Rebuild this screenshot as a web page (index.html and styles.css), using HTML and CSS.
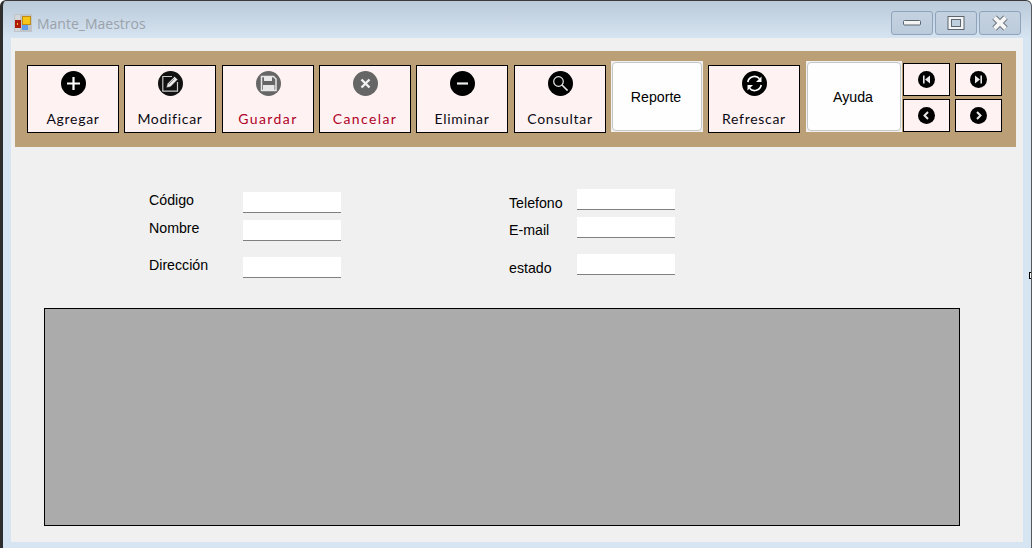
FILE: index.html
```html
<!DOCTYPE html>
<html lang="es">
<head>
<meta charset="utf-8">
<title>Mante_Maestros</title>
<link rel="stylesheet" href="styles.css">
</head>
<body>
<div class="window">
  <header class="titlebar">
    <svg class="app-icon" viewBox="0 0 18 18" width="18" height="18">
      <rect width="18" height="18" fill="#bfc4c8"/>
      <rect x="1" y="1" width="5" height="16" fill="#d5d8da"/>
      <rect x="1" y="6" width="6" height="8" fill="#b01808"/>
      <rect x="3" y="9" width="1" height="2" fill="#f0c040"/>
      <rect x="8.5" y="2.5" width="8" height="8" fill="#f5c518" stroke="#c08a10"/>
      <rect x="8" y="11" width="6" height="5" fill="#5f9de8"/>
    </svg>
    <span class="title">Mante_Maestros</span>
    <div class="win-controls">
      <div class="win-btn">
        <svg width="18" height="8" viewBox="0 0 18 8"><rect x=".5" y="1.5" width="17" height="4.5" rx="1" fill="#f4f4f4" stroke="#5c6670"/></svg>
      </div>
      <div class="win-btn">
        <svg width="18" height="16" viewBox="0 0 18 16"><rect x="1" y="1.5" width="16" height="13" fill="#f4f4f4" stroke="#5c6670"/><rect x="4.5" y="4.5" width="9" height="7" fill="#bfcedd" stroke="#5c6670"/></svg>
      </div>
      <div class="win-btn">
        <svg width="20" height="18" viewBox="0 0 20 18"><path d="M4.5 3.5L15.5 14.5M15.5 3.5L4.5 14.5" stroke="#5c6670" stroke-width="6"/><path d="M4.5 3.5L15.5 14.5M15.5 3.5L4.5 14.5" stroke="#f6f6f6" stroke-width="4"/></svg>
      </div>
    </div>
  </header>

  <main class="content">
    <div class="toolbar">
      <button class="tool">
        <svg class="icon" viewBox="0 0 25 25"><circle cx="12.5" cy="12.5" r="12.5" fill="#000"/><path d="M12.5 6v13M6 12.5h13" stroke="#fff" stroke-width="2.2"/></svg>
        <span class="tool-label">Agregar</span>
      </button>
      <button class="tool">
        <svg class="icon" viewBox="0 0 25 25"><circle cx="12.5" cy="12.5" r="12.5" fill="#111"/><path d="M14 5.5H4.8v14.7h14.7V11" fill="none" stroke="#c8c8c8" stroke-width="1.2"/><path d="M8.4 16.8l1-4.2 7.2-7.2 3.2 3.2-7.2 7.2z" fill="#ececec" stroke="#222" stroke-width=".6"/><path d="M10.6 13.2l5.6-5.6" stroke="#555" stroke-width=".8"/></svg>
        <span class="tool-label">Modificar</span>
      </button>
      <button class="tool wide">
        <svg class="icon" viewBox="0 0 25 25"><circle cx="12.5" cy="12.5" r="12.5" fill="#666"/><path d="M5.5 5.5h12l2.5 2.5v11.500H5.500z" fill="none" stroke="#e8e8e8" stroke-width="1.500"/><rect x="8" y="5.500" width="8" height="4.500" fill="#e8e8e8"/><rect x="7" y="14" width="11.500" height="5" fill="#e8e8e8"/></svg>
        <span class="tool-label off">Guardar</span>
      </button>
      <button class="tool">
        <svg class="icon" viewBox="0 0 25 25"><circle cx="12.5" cy="12.5" r="12.5" fill="#666"/><path d="M8.500 8.500l8 8M16.500 8.500l-8 8" stroke="#f2f2f2" stroke-width="2.400"/></svg>
        <span class="tool-label off">Cancelar</span>
      </button>
      <button class="tool">
        <svg class="icon" viewBox="0 0 25 25"><circle cx="12.5" cy="12.5" r="12.5" fill="#000"/><path d="M7 12.5h11" stroke="#eee" stroke-width="2.200"/></svg>
        <span class="tool-label">Eliminar</span>
      </button>
      <button class="tool wide">
        <svg class="icon" viewBox="0 0 25 25"><circle cx="12.5" cy="12.5" r="12.5" fill="#000"/><circle cx="10.5" cy="10.5" r="4.800" fill="none" stroke="#e6e6e6" stroke-width="1.200"/><path d="M14 14l5.600 5.600" stroke="#e6e6e6" stroke-width="1.500"/></svg>
        <span class="tool-label">Consultar</span>
      </button>
      <button class="plain">
        <span class="plain-face">Reporte</span>
      </button>
      <button class="tool">
        <svg class="icon" viewBox="0 0 25 25"><circle cx="12.5" cy="12.5" r="12.5" fill="#000"/><path d="M5.800 11a6.800 6.800 0 0 1 11.700-3.300" fill="none" stroke="#fff" stroke-width="1.700"/><path d="M19.200 14a6.800 6.800 0 0 1-11.700 3.300" fill="none" stroke="#fff" stroke-width="1.700"/><path d="M19.500 5.500v5.500h-5.500z" fill="#fff"/><path d="M5.500 19.500V14h5.500z" fill="#fff"/></svg>
        <span class="tool-label">Refrescar</span>
      </button>
      <button class="plain help">
        <span class="plain-face">Ayuda</span>
      </button>
      <div class="nav-grid">
        <button class="nav">
          <svg class="nav-icon" viewBox="0 0 17 17"><circle cx="8.5" cy="8.5" r="8.5" fill="#000"/><path d="M5 4.500h1.600v8H5zM12 4.500v8L7 8.500z" fill="#e8e8e8"/></svg>
        </button>
        <button class="nav">
          <svg class="nav-icon" viewBox="0 0 17 17"><circle cx="8.5" cy="8.5" r="8.5" fill="#000"/><path d="M12 4.500h-1.600v8H12zM5 4.500v8l5-4z" fill="#e8e8e8"/></svg>
        </button>
        <button class="nav">
          <svg class="nav-icon" viewBox="0 0 17 17"><circle cx="8.5" cy="8.5" r="8.5" fill="#000"/><path d="M10 5L6.500 8.500 10 12" fill="none" stroke="#e8e8e8" stroke-width="2"/></svg>
        </button>
        <button class="nav">
          <svg class="nav-icon" viewBox="0 0 17 17"><circle cx="8.5" cy="8.5" r="8.5" fill="#000"/><path d="M7 5l3.500 3.500L7 12" fill="none" stroke="#e8e8e8" stroke-width="2"/></svg>
        </button>
      </div>
    </div>

    <form class="form">
      <div class="col col-left">
        <div class="row"><label class="lbl">Código</label><input class="field" type="text"></div>
        <div class="row"><label class="lbl">Nombre</label><input class="field" type="text"></div>
        <div class="row row-far"><label class="lbl">Dirección</label><input class="field" type="text"></div>
      </div>
      <div class="col col-right">
        <div class="row"><label class="lbl">Telefono</label><input class="field" type="text"></div>
        <div class="row"><label class="lbl">E-mail</label><input class="field" type="text"></div>
        <div class="row row-far"><label class="lbl">estado</label><input class="field" type="text"></div>
      </div>
    </form>

    <div class="grid-view"></div>
  </main>
  <div class="edge-mark"></div>
</div>
</body>
</html>
```
FILE: styles.css
```css
* { box-sizing: border-box; }
html, body { margin: 0; padding: 0; }
body { width: 1032px; height: 548px; overflow: hidden; background: #fff; }

.window {
  position: relative;
  width: 1032px;
  height: 548px;
  display: flex;
  flex-direction: column;
  padding: 0 8px 6px 8px;
  border-left: 3px solid #2e2e2e;
  border-right: 1px solid #55585c;
  border-top: 1px solid #3a3a3a;
  border-radius: 6px 6px 0 0;
  background: linear-gradient(#bacad9 0, #d7e4f2 38px, #d7e4f2 100%);
}

.titlebar {
  height: 37px;
  flex: none;
  display: flex;
  align-items: flex-start;
}
.app-icon { margin: 13px 0 0 3px; }
.title {
  margin: 13px 0 0 5px;
  font: 14px/20px "Open Sans", sans-serif;
  color: #9aa2ab;
}
.win-controls {
  margin: 10px 2px 0 auto;
  display: flex;
  gap: 2px;
}
.win-btn {
  width: 42px;
  height: 24px;
  border: 1px solid #8ea3bc;
  border-radius: 3px;
  background: linear-gradient(#c4d2e0, #bccbdb);
  display: flex;
  align-items: center;
  justify-content: center;
}

.content {
  flex: 1;
  background: #f0f0f0;
  padding: 13px 7px 0 4px;
  display: flex;
  flex-direction: column;
}

.toolbar {
  height: 96px;
  flex: none;
  background: #bba077;
  padding: 10px 0 0 12px;
  display: flex;
  align-items: flex-start;
  gap: 5px;
}

.tool {
  width: 92px;
  height: 68px;
  margin-top: 4px;
  padding: 5px 0 0;
  border: 1px solid #000;
  background: #fff2f2;
  display: flex;
  flex-direction: column;
  align-items: center;
}
.tool.wide { margin-left: 1px; }
.icon { width: 25px; height: 25px; display: block; }
.tool-label {
  margin-top: 14px;
  font: 400 14px/18px "Lato", sans-serif;
  letter-spacing: .7px;
  color: #0a0a14;
}
.tool-label.off { color: #b00028; letter-spacing: 1.4px; }

.plain {
  width: 92px;
  height: 71px;
  padding: 0;
  border: 1px solid #f0f0f0;
  background: #f0f0f0;
}
.plain.help { width: 96px; margin: 0 -4px 0 1px; }
.plain-face {
  height: 100%;
  padding: 1px 2px 0 0;
  display: flex;
  align-items: center;
  justify-content: center;
  border: 1px solid #c6c6c6;
  border-radius: 4px;
  background: #fefefe;
  color: #000;
  font: 14.2px "Liberation Sans", sans-serif;
}

.nav-grid {
  margin: 2px 0 0 0;
  display: grid;
  grid-template-columns: 47px 47px;
  grid-auto-rows: 33px;
  column-gap: 5px;
  row-gap: 3px;
}
.nav {
  padding: 0;
  border: 1px solid #000;
  background: #fff2f2;
  display: flex;
  align-items: center;
  justify-content: center;
}
.nav-icon { width: 17px; height: 17px; display: block; }

.form {
  height: 161px;
  flex: none;
  display: flex;
  padding: 42px 0 0 134px;
}
.col { display: flex; flex-direction: column; gap: 7px; }
.col-left { width: 360px; padding-top: 3px; }
.row { display: flex; align-items: flex-start; height: 21px; }
.row-far { margin-top: 9px; }
.lbl {
  font: 14.2px/16px "Liberation Sans", sans-serif;
  color: #000;
}
.col-left .lbl { width: 94px; }
.col-right .lbl { width: 68px; margin-top: 6px; }
.col-right .row:nth-child(2) .lbl { margin-top: 5px; }
.field {
  width: 98px;
  height: 21px;
  padding: 0;
  border: 0;
  border-bottom: 1px solid #808080;
  background: #fff;
}

.grid-view {
  width: 916px;
  height: 218px;
  margin-left: 29px;
  flex: none;
  background: #ababab;
  border: 1px solid #000;
}

.edge-mark {
  position: absolute;
  right: 0;
  top: 271px;
  width: 2px;
  height: 7px;
  background: #fff;
  border: 1px solid #000;
  border-right: 0;
}
```
